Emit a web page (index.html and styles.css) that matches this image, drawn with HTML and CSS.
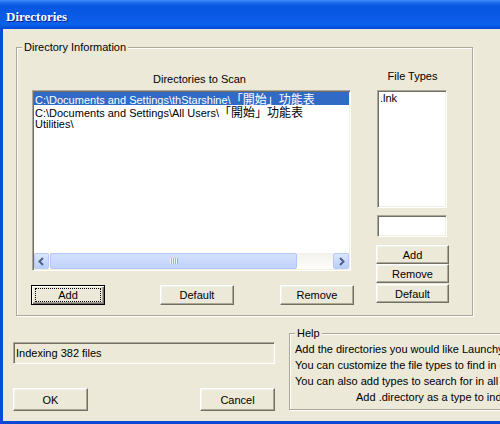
FILE: index.html
```html
<!DOCTYPE html>
<html lang="en">
<head>
    <meta charset="UTF-8">
    <title>Directories</title>
    <link rel="stylesheet" href="styles.css">
</head>
<body>
    <div class="window">
        <div class="titlebar"><span class="title">Directories</span></div>
        <div class="client">
            <fieldset class="group dir-group">
                <legend>Directory Information</legend>
                <div class="dir-row">
                    <div class="scan-col">
                        <div class="scan-label">Directories to Scan</div>
                        <div class="listbox scan-list">
                            <div class="rows">
                                <div class="row selected">C:\Documents and Settings\thStarshine\<span class="cjk">「開始」功能表</span></div>
                                <div class="row">C:\Documents and Settings\All Users\<span class="cjk">「開始」功能表</span></div>
                                <div class="row">Utilities\</div>
                            </div>
                            <div class="hscroll">
                                <div class="sb-btn">
                                    <svg width="9" height="9" viewBox="0 0 9 9"><polyline points="6,1 2.5,4.5 6,8" fill="none" stroke="#4D6185" stroke-width="2"/></svg>
                                </div>
                                <div class="sb-thumb"><span class="grip"></span></div>
                                <div class="sb-track"></div>
                                <div class="sb-btn">
                                    <svg width="9" height="9" viewBox="0 0 9 9"><polyline points="3,1 6.5,4.5 3,8" fill="none" stroke="#4D6185" stroke-width="2"/></svg>
                                </div>
                            </div>
                        </div>
                        <div class="scan-buttons">
                            <button class="btn btn-default scan-add"><span class="focus">Add</span></button>
                            <button class="btn scan-default">Default</button>
                            <button class="btn scan-remove">Remove</button>
                        </div>
                    </div>
                    <div class="types-col">
                        <div class="types-label">File Types</div>
                        <div class="listbox types-list">
                            <div class="row">.lnk</div>
                        </div>
                        <div class="textbox types-input"></div>
                        <div class="types-buttons">
                            <button class="btn">Add</button>
                            <button class="btn">Remove</button>
                            <button class="btn">Default</button>
                        </div>
                    </div>
                </div>
            </fieldset>

            <div class="bottom">
                <div class="status-col">
                    <div class="textbox status">Indexing 382 files</div>
                    <div class="ok-row">
                        <button class="btn btn-ok">OK</button>
                        <button class="btn btn-ok">Cancel</button>
                    </div>
                </div>
                <fieldset class="group help-group">
                    <legend>Help</legend>
                    <div class="help-line">Add the directories you would like Launchy to search for applications.</div>
                    <div class="help-line">You can customize the file types to find in each directory.</div>
                    <div class="help-line">You can also add types to search for in all directories.</div>
                    <div class="help-line help-last">Add .directory as a type to index directories.</div>
                </fieldset>
            </div>
        </div>
    </div>
</body>
</html>
```

FILE: styles.css
```css
body {
    margin: 0;
    overflow: hidden;
    font-family: "Liberation Sans", "Noto Sans CJK TC", sans-serif;
    font-size: 11px;
    color: #000;
    background-color: #ECE9D8;
}

.window {
    width: 540px;
    height: 424px;
}

.titlebar {
    height: 29px;
    box-sizing: border-box;
    padding: 5px 0 0 6px;
    background: linear-gradient(to bottom, #3D8EF7 0px, #1A68EC 3px, #0857E2 6px, #0A5AE6 18px, #0B62EE 25px, #0446D2 29px);
}

.title {
    font: bold 13px/24px "Liberation Serif", serif;
    color: #fff;
    text-shadow: 1px 1px 0 #0A1E8C;
}

.client {
    height: 395px;
    box-sizing: border-box;
    padding-top: 12px;
    border-left: 3px solid #0B4DDB;
    border-bottom: 3px solid #0A47D5;
    background-color: #ECE9D8;
}

/* group boxes */
.group {
    margin: 0;
    padding: 0;
    min-width: 0;
    box-sizing: border-box;
    border: 1px solid #ACA899;
    box-shadow: 1px 1px 0 #fff, inset 1px 1px 0 #fff;
}

.group legend {
    margin-left: 5px;
    padding: 0 2px;
    line-height: 13px;
    background-color: #ECE9D8;
}

.dir-group {
    margin-left: 13px;
    width: 457px;
    height: 275px;
}

.dir-row {
    display: flex;
    padding: 16px 0 0 14px;
}

.scan-col {
    width: 323px;
}

.scan-label {
    margin-top: 3px;
    height: 13px;
    line-height: 13px;
    text-align: center;
    padding-left: 14px;
}

/* list boxes and text fields */
.listbox, .textbox {
    box-sizing: border-box;
    border: 1px solid;
    border-color: #ACA899 #fff #fff #ACA899;
    padding: 1px;
    box-shadow: inset 1px 1px 0 #716F64, inset -1px -1px 0 #F1EFE2;
    background-color: #fff;
}

.scan-list {
    margin: 4px 0 0 1px;
    width: 319px;
    height: 181px;
    display: flex;
    flex-direction: column;
}

.rows {
    flex: 1;
}

.row {
    height: 13px;
    line-height: 13px;
    padding-left: 1px;
    white-space: nowrap;
}

.row.selected {
    background-color: #316AC5;
    color: #fff;
}

.cjk {
    font-family: "Noto Sans CJK TC", sans-serif;
    font-size: 12px;
    line-height: 13px;
}

/* horizontal scroll bar */
.hscroll {
    height: 16px;
    display: flex;
    background: linear-gradient(to bottom, #F3F1EC, #FEFEFB);
}

.sb-btn {
    width: 15px;
    box-sizing: border-box;
    border: 1px solid #B7CAF5;
    border-radius: 2px;
    background: linear-gradient(to bottom, #DCE7FE, #B9CEFB);
    display: flex;
    justify-content: center;
    align-items: center;
}

.sb-btn:last-child {
    width: 16px;
}

.sb-thumb {
    margin-left: 1px;
    width: 247px;
    box-sizing: border-box;
    border: 1px solid #B1C6F6;
    border-radius: 2px;
    background: linear-gradient(to bottom, #D3E0FD, #C1D3FB);
    display: flex;
    justify-content: center;
    align-items: center;
}

.grip {
    width: 8px;
    height: 6px;
    background: repeating-linear-gradient(to right, #EEF4FE 0 1px, #8CB0F8 1px 2px);
}

.sb-track {
    flex: 1;
}

/* buttons */
.btn {
    box-sizing: border-box;
    margin: 0;
    padding: 0;
    font-family: "Liberation Sans", sans-serif;
    font-size: 11px;
    color: #000;
    background-color: #ECE9D8;
    border: 1px solid;
    border-color: #fff #716F64 #716F64 #fff;
    box-shadow: inset -1px -1px 0 #ACA899, inset 1px 1px 0 #F5F4EA;
}

.btn-default {
    display: flex;
    padding: 2px 3px 2px 3px;
    border-color: #000;
    box-shadow: inset 1px 1px 0 #fff, inset -1px -1px 0 #716F64, inset -2px -2px 0 #ACA899;
}

.btn-default .focus {
    flex: 1;
    display: flex;
    justify-content: center;
    align-items: center;
    border: 1px dotted #000;
}

.scan-buttons {
    display: flex;
    margin-top: 14px;
}

.scan-buttons .btn {
    width: 74px;
    height: 20px;
}

.scan-default {
    margin-left: 55px;
}

.scan-remove {
    margin-left: 46px;
}

.types-col {
    margin-left: 22px;
    width: 73px;
}

.types-label {
    height: 13px;
    line-height: 13px;
    text-align: center;
}

.types-list {
    margin: 7px 0 0 1px;
    width: 70px;
    height: 118px;
}

.types-input {
    margin: 7px 0 0 1px;
    width: 70px;
    height: 22px;
}

.types-buttons {
    margin-top: 8px;
    display: flex;
    flex-direction: column;
}

.types-buttons .btn {
    width: 73px;
    height: 19px;
}

.types-buttons .btn:last-child {
    margin-top: 1px;
}

/* bottom area */
.bottom {
    display: flex;
}

.status-col {
    margin-left: 10px;
    width: 262px;
}

.status {
    margin-top: 26px;
    height: 22px;
    line-height: 18px;
    padding-left: 2px;
    background-color: #ECE9D8;
}

.ok-row {
    margin-top: 24px;
    display: flex;
    justify-content: space-between;
}

.btn-ok {
    width: 75px;
    height: 23px;
}

.help-group {
    margin: 11px 0 0 14px;
    width: 250px;
    height: 83px;
    overflow: hidden;
}

.help-line {
    padding-left: 5px;
    line-height: 16px;
    white-space: nowrap;
}

.help-line:first-of-type {
    margin-top: 1px;
}

.help-last {
    padding-left: 66px;
}
```
